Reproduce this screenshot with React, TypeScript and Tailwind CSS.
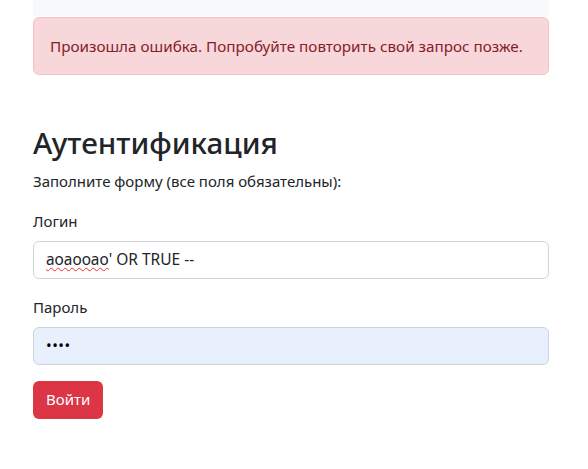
const App = () => (
  <div className="min-h-[469px] bg-white font-['Noto_Sans',sans-serif] text-[#212529]">
    <div className="ml-[33px] w-[516px]">
      <div className="h-[16px] bg-[#f8f9fa]" />
      <div className="mt-px rounded-[6px] border border-[#f5c2c7] bg-[#f8d7da] px-4 py-4 text-[15.25px] leading-6 text-[#842029]">
        Произошла ошибка. Попробуйте повторить свой запрос позже.
      </div>

      <h1 className="mt-[50px] mb-2 text-[29.6px] font-medium leading-[1.2]">Аутентификация</h1>
      <p className="mb-4 text-[15px] leading-6">Заполните форму (все поля обязательны):</p>

      <form className="flex flex-col">
        <label className="mb-2 text-[15px] leading-6">Логин</label>
        <div className="flex h-[38px] items-center rounded-[6px] border border-[#ced4da] bg-white px-3 text-[15.5px]">
          <span className="underline decoration-red-500 decoration-wavy decoration-1 underline-offset-2">аоаооао</span>
          <span>&apos; OR TRUE --</span>
        </div>

        <label className="mt-4 mb-2 text-[15px] leading-6">Пароль</label>
        <div className="flex h-[38px] items-center rounded-[6px] border border-[#ced4da] bg-[#e8f0fe] px-3 text-[15px] tracking-[0.5px] text-black">
          ••••
        </div>

        <div className="mt-4">
          <button
            type="button"
            className="h-[38px] rounded-[6px] bg-[#dc3545] px-[13px] text-[15px] text-white">
            Войти
          </button>
        </div>
      </form>
    </div>
  </div>
);

export default App;
